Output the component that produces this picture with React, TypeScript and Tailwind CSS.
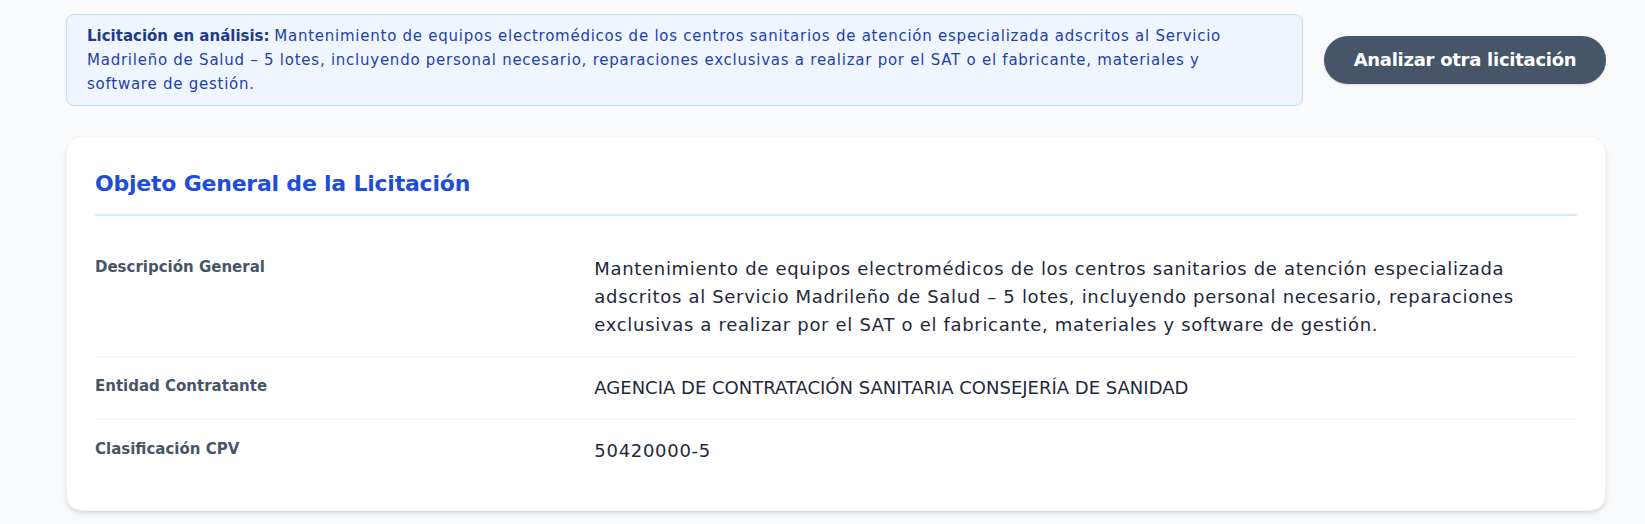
import React from "react";

const rows = [
  {
    label: "Descripción General",
    value:
      "Mantenimiento de equipos electromédicos de los centros sanitarios de atención especializada adscritos al Servicio Madrileño de Salud – 5 lotes, incluyendo personal necesario, reparaciones exclusivas a realizar por el SAT o el fabricante, materiales y software de gestión.",
    track: "tracking-[0.68px]",
  },
  {
    label: "Entidad Contratante",
    value: "AGENCIA DE CONTRATACIÓN SANITARIA CONSEJERÍA DE SANIDAD",
    track: "tracking-normal",
  },
  { label: "Clasificación CPV", value: "50420000-5", track: "tracking-[0.7px]" },
];

export default function App() {
  return (
    <div className="min-h-screen bg-[#f8fafc] pl-[66px] pr-[39px] pt-[14px] font-['DejaVu_Sans',sans-serif]">
      <div className="flex items-center gap-[21px]">
        <div className="flex-1 rounded-lg border border-blue-200 bg-blue-50 px-5 pt-[9px] pb-[9px] text-[15px] leading-6 text-[#1e40af]">
          <span className="font-bold text-[#1e3a8a]">Licitación en análisis:</span>{" "}
          <span className="tracking-[0.75px]">
            Mantenimiento de equipos electromédicos de los centros sanitarios de atención especializada adscritos al Servicio
            <br />
            Madrileño de Salud – 5 lotes, incluyendo personal necesario, reparaciones exclusivas a realizar por el SAT o el fabricante, materiales y
            <br />
            software de gestión.
          </span>
        </div>
        <button className="h-12 w-[282px] shrink-0 rounded-full bg-[#475569] text-lg font-bold tracking-[-0.015em] text-white shadow-sm">
          Analizar otra licitación
        </button>
      </div>

      <div className="mt-[30px] rounded-2xl border border-gray-100 bg-white px-7 pt-7 pb-7 shadow-md">
        <h2 className="mt-[5px] border-b-2 border-blue-100 pb-4 text-[22px] font-bold leading-7 tracking-[-0.01em] text-[#1d4ed8]">
          Objeto General de la Licitación
        </h2>
        <div className="mt-[22px]">
          {rows.map((r, i) => (
            <div
              key={r.label}
              className={
                "grid grid-cols-3 gap-4 py-[17px] " +
                (i < rows.length - 1 ? "border-b border-slate-100" : "")
              }
            >
              <div className="text-[15px] font-bold leading-6 text-[#475569]">{r.label}</div>
              <div className={"col-span-2 text-lg leading-7 text-[#1e293b] " + r.track}>{r.value}</div>
            </div>
          ))}
        </div>
      </div>
    </div>
  );
}
